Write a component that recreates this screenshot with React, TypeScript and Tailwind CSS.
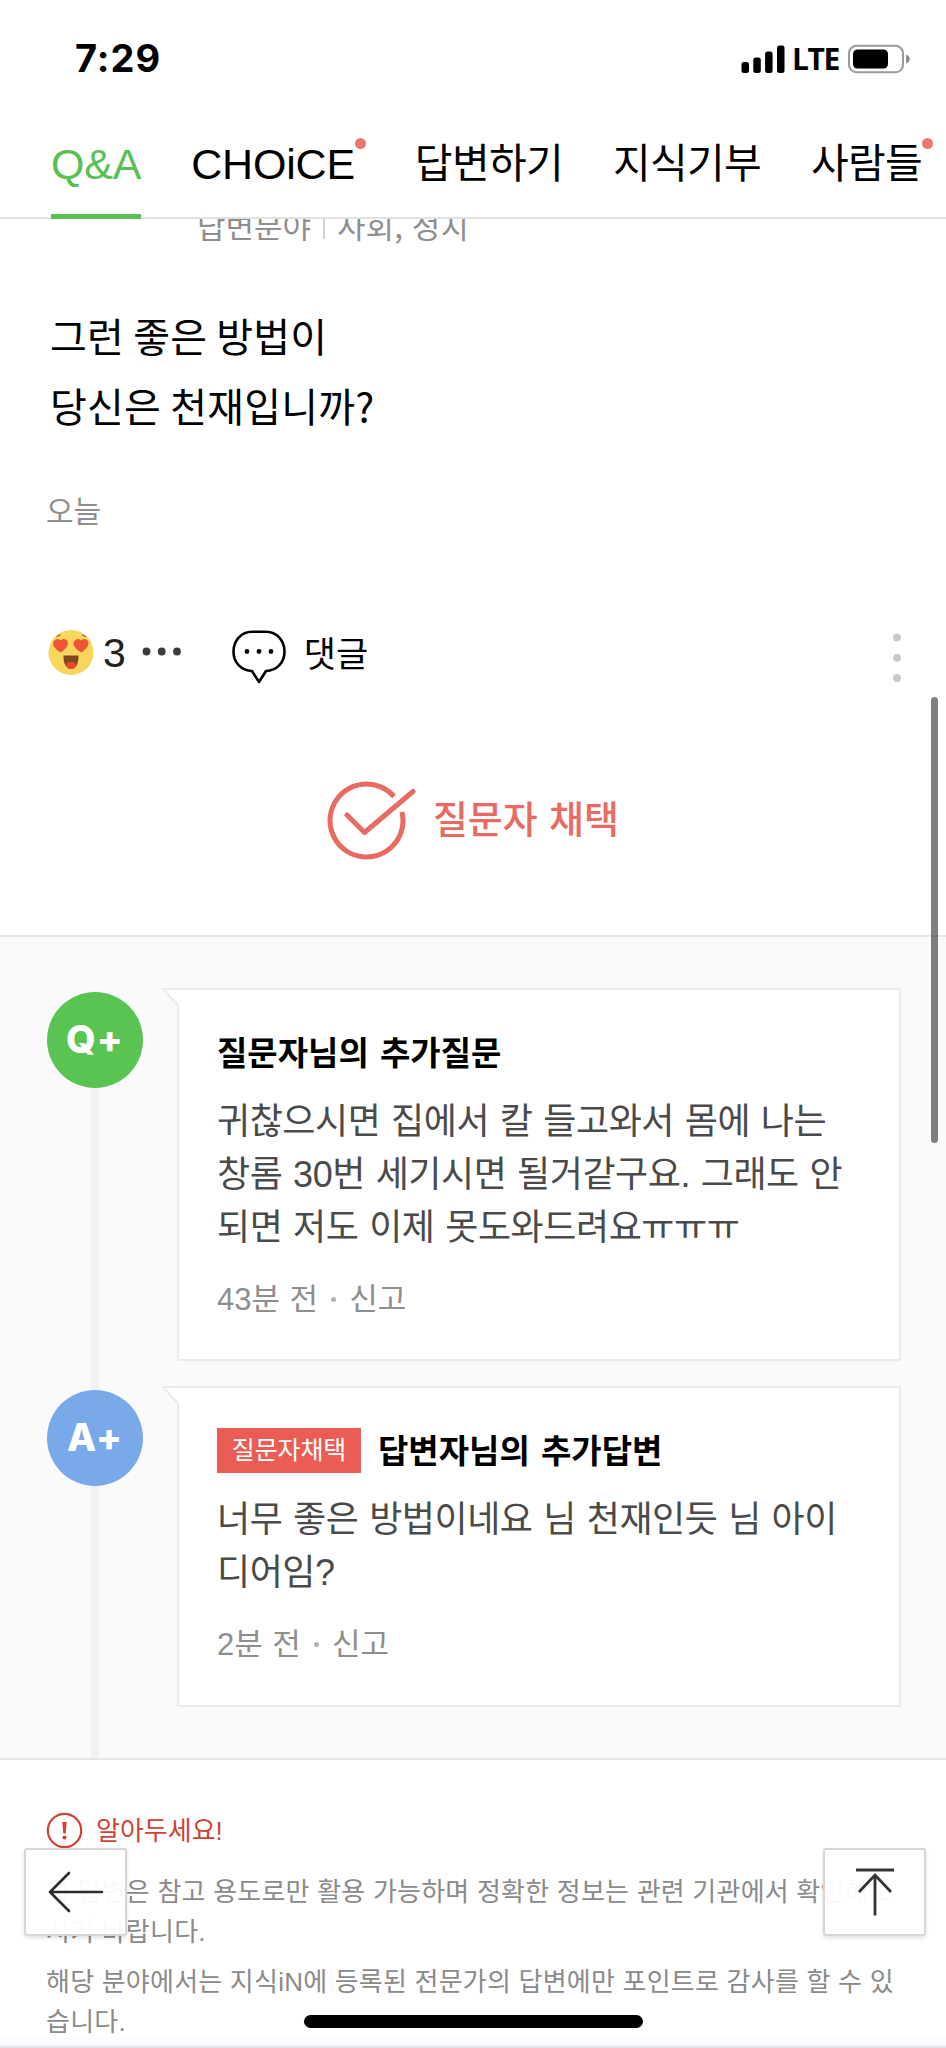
import type { ReactNode } from "react";

const tabs = [
  { label: "Q&A", active: true, className: "text-[43px] tracking-[-0.2px]" },
  { label: "CHOiCE", dot: true, className: "mr-[10px] text-[43px] tracking-[-0.2px]" },
  { label: "답변하기", className: "text-[41px] tracking-[-0.7px]" },
  { label: "지식기부", className: "text-[41px] tracking-[-0.7px]" },
  { label: "사람들", dot: true, className: "text-[41px] tracking-[-0.7px]" },
];

function StatusBar() {
  return (
    <div className="flex h-[110px] items-start justify-between pl-[75px] pr-[35px]">
      <span className="mt-[34px] font-['Inter'] text-[38px] font-bold leading-[48px] tracking-[1px] text-black">
        7:29
      </span>

      <div className="mt-[43px] flex items-center">
        <svg width="44" height="30" viewBox="0 0 44 30">
          <rect x="0.5" y="18" width="7.5" height="11" rx="2.5" />
          <rect x="12.3" y="13.5" width="7.5" height="15.5" rx="2.5" />
          <rect x="24.1" y="7.5" width="7.5" height="21.5" rx="2.5" />
          <rect x="36" y="1.5" width="7.5" height="27.5" rx="2.5" />
        </svg>
        <span className="ml-[7px] w-[56px] pt-[1px] font-['Open_Sans'] text-[30px] font-bold leading-[30px] tracking-[-1.4px] text-black">
          LTE
        </span>
        <svg width="63" height="30" viewBox="0 0 63 30">
          <rect x="1" y="1.8" width="54" height="26.5" rx="7.5" fill="none" stroke="#999" strokeWidth="2" />
          <rect x="5" y="5.5" width="35" height="19" rx="4.5" />
          <path d="M58 10.5c5 1.5 5 7.5 0 9z" fill="#8c8c8c" />
        </svg>
      </div>
    </div>
  );
}

function Tabs() {
  return (
    <nav className="flex h-[109px] gap-[50px] border-b-[2px] border-[#e2e2e2] pl-[51px] font-['Liberation_Sans','Noto_Sans_CJK_KR',sans-serif] leading-[56px]">
      {tabs.map((tab) => (
        <div
          key={tab.label}
          className={`${tab.className} ${
            tab.active
              ? "relative -mb-[2px] h-[109px] border-b-[5px] border-[#58c154] text-[#58c154]"
              : "relative h-[107px] text-black"
          }`}
        >
          <span className="block whitespace-nowrap pt-[26px]">{tab.label}</span>
          {tab.dot && (
            <span className="absolute -right-[11px] top-[28px] size-[11px] rounded-full bg-[#ed7672]" />
          )}
        </div>
      ))}
    </nav>
  );
}

function LoveFace() {
  return (
    <svg width="46" height="46" viewBox="0 0 46 46">
      <circle cx="23" cy="22.5" r="22.5" fill="#f6d65b" />
      <path d="M8.5 7q1.500-1.800 4-2M34 5q2.500 .3 4 2" fill="none" stroke="#6b5a28" strokeWidth="1" />
      <path d="M13 22.5C8 20 3.5 15.5 5.5 11.5 7.2 8.3 11 8.2 12.5 10.5c2-2.300 6-2.200 7.200 1 1.300 4.200-3.200 8.500-6.700 11z" fill="#ee5436" />
      <path d="M33.5 22.5c-5-2.500-9.500-7-7.500-11 1.700-3.200 5.500-3.300 7-1 2-2.300 6-2.200 7.200 1 1.300 4.200-3.200 8.500-6.700 11z" fill="#ee5436" />
      <path d="M15.5 25.5h15c.5 7-2.500 13.500-7.500 13.500S15 32.5 15.5 25.5z" fill="#7c4a1e" />
      <path d="M18 35c1-4.500 9-4.500 10 0-1 3-3 4-5 4s-4-1-5-4z" fill="#f0452f" />
    </svg>
  );
}

function Reactions() {
  return (
    <div className="flex h-[54px] items-start pl-[48px] pr-[45px]">
      <LoveFace />
      <span className="ml-[9px] mt-[3px] font-['Liberation_Sans'] text-[41px] leading-[40px] text-[#222]">3</span>
      <svg className="ml-[16px] mt-[17px]" width="40" height="9" viewBox="0 0 40 9" fill="#3a3a3a">
        <circle cx="4.5" cy="4.5" r="3.9" />
        <circle cx="19.7" cy="4.5" r="3.9" />
        <circle cx="35" cy="4.5" r="3.9" />
      </svg>
      <svg className="ml-[50px]" width="54" height="54" viewBox="0 0 54 54">
        <path
          d="M20 1.7h14C45 1.7 52.5 11 52.5 21.5 52.5 33 44.5 40.5 34 41L27 52 20 41C9.5 40.5 1.5 33 1.5 21.5 1.5 11 9 1.7 20 1.7z"
          fill="none"
          stroke="#000"
          strokeWidth="2.6"
          strokeLinejoin="round"
        />
        <circle cx="15" cy="21.5" r="2.4" />
        <circle cx="27" cy="21.5" r="2.4" />
        <circle cx="39" cy="21.5" r="2.4" />
      </svg>
      <span className="ml-[18px] font-['Noto_Sans_CJK_KR',sans-serif] text-[35px] leading-[44px] text-black">
        댓글
      </span>
      <svg className="ml-auto mt-[3px]" width="8" height="50" viewBox="0 0 8 50" fill="#c8c8ca">
        <circle cx="4" cy="4.5" r="3.9" />
        <circle cx="4" cy="24.8" r="3.9" />
        <circle cx="4" cy="45" r="3.9" />
      </svg>
    </div>
  );
}

function Adopted() {
  return (
    <div className="mt-[97px] flex h-[80px] items-center pl-[326px] text-[#e96a60]">
      <svg width="90" height="80" viewBox="0 0 90 80" fill="none" stroke="currentColor" strokeWidth="5" strokeLinecap="round" strokeLinejoin="round">
        <path d="M68 15.5A36.5 36.5 0 1 0 76 31" strokeLinecap="butt" />
        <path d="M21 34l17.5 17.5L87 10.5" />
      </svg>
      <span className="-mt-[8px] ml-[17px] font-['Noto_Sans_CJK_KR',sans-serif] text-[38px] font-medium leading-[50px] tracking-[-0.1px] [word-spacing:3px]">
        질문자 채택
      </span>
    </div>
  );
}

type ReplyProps = {
  mark: string;
  markClass: string;
  cardClass: string;
  title: string;
  badge?: string;
  time: string;
  children: ReactNode;
};

function Reply({ mark, markClass, cardClass, title, badge, time, children }: ReplyProps) {
  return (
    <div className="flex items-start pl-[47px] pr-[45px]">
      <div
        className={`${markClass} mt-[4px] flex size-[96px] shrink-0 items-center justify-center rounded-full font-['Inter'] text-[38px] font-extrabold tracking-[1px] text-white`}
      >
        {mark}
      </div>

      <div className={`${cardClass} relative ml-[34px] flex-1 border-[2px] border-[#ebebeb] bg-white pl-[38px]`}>
        {/* speech tail */}
        <svg className="absolute -left-[18px] -top-[2px]" width="20" height="20" viewBox="0 0 20 20">
          <path d="M2 1h18v18h-2v-1.5z" fill="#fff" />
          <path d="M20 1H2l15 16.5V20" fill="none" stroke="#ebebeb" strokeWidth="2" />
        </svg>

        <div className="flex h-[46px] items-center">
          {badge && (
            <span className="mr-[17px] flex h-[45px] w-[144px] items-center justify-center bg-[#ea5c54] pb-[5px] font-['Noto_Sans_CJK_KR',sans-serif] text-[25px] leading-[39px] tracking-[-0.1px] text-white">
              {badge}
            </span>
          )}
          <strong className="pt-[3px] font-['Liberation_Sans','Noto_Sans_CJK_KR',sans-serif] text-[33px] font-bold text-black [word-spacing:2px]">
            {title}
          </strong>
        </div>

        <p className="mt-[19px] font-['Liberation_Sans','Noto_Sans_CJK_KR',sans-serif] text-[36px] leading-[53.2px] tracking-[-0.45px] text-[#4a4a4a] [word-spacing:1.2px]">
          {children}
        </p>

        <p className="mt-[24px] flex font-['Liberation_Sans','Noto_Sans_CJK_KR',sans-serif] text-[31px] leading-[44px] text-[#8e8e8e] [word-spacing:1px]">
          {time}
          <span className="mx-[13px] mt-[19px] size-[5px] rounded-full bg-[#b4b4b4]" />
          신고
        </p>
      </div>
    </div>
  );
}

function Notice() {
  return (
    <section className="h-[288px] overflow-hidden bg-white pl-[46px] pt-[51px] font-['Liberation_Sans','Noto_Sans_CJK_KR',sans-serif] text-[26px] leading-[40px] text-[#8a8a8a]">
      <div className="flex h-[40px] items-center text-[#cf4334]">
        <svg width="37" height="37" viewBox="0 0 37 37">
          <circle cx="18.5" cy="18.5" r="16.7" fill="none" stroke="currentColor" strokeWidth="2.2" />
          <path d="M16.3 10h4.4l-1 11.5h-2.4z" fill="currentColor" />
          <circle cx="18.5" cy="25.5" r="2.1" fill="currentColor" />
        </svg>
        <span className="ml-[13px]">알아두세요!</span>
      </div>
      <p className="mt-[21px] whitespace-nowrap tracking-[0.22px]">
        위 답변은 참고 용도로만 활용 가능하며 정확한 정보는 관련 기관에서 확인해보
        <br />
        시기 바랍니다.
      </p>
      <p className="mt-[10px] whitespace-nowrap tracking-[0.22px]">
        해당 분야에서는 지식iN에 등록된 전문가의 답변에만 포인트로 감사를 할 수 있
        <br />
        습니다.
      </p>
    </section>
  );
}

export default function App() {
  return (
    <div className="relative h-[2048px] w-[946px] overflow-hidden bg-white">
      <header className="relative z-10 bg-white">
        <StatusBar />
        <Tabs />
      </header>

      <p className="-mt-[14px] flex h-[44px] pl-[197px] font-['Noto_Sans_CJK_KR',sans-serif] text-[31px] leading-[40px] text-[#8e8e8e] [word-spacing:2px]">
        답변분야
        <span className="ml-[12px] mr-[12px] mt-[12px] h-[22px] w-[2px] bg-[#d2d2d2]" />
        사회, 정치
      </p>

      <p className="mt-[51px] pl-[50px] font-['Noto_Sans_CJK_KR',sans-serif] text-[40px] leading-[70.3px] tracking-[0.2px] text-black">
        그런 좋은 방법이
        <br />
        당신은 천재입니까?
      </p>
      <p className="mb-[101px] mt-[48px] pl-[46px] font-['Noto_Sans_CJK_KR',sans-serif] text-[30px] leading-[40px] text-[#8e8e8e]">
        오늘
      </p>

      <Reactions />
      <Adopted />

      <section className="relative mt-[74px] h-[825px] border-y-[2px] border-[#e6e6e6] bg-[#fafafa]">
        <div className="absolute bottom-0 left-[91px] top-[60px] w-[8px] bg-[#f1f2f5]" />
        <div className="relative flex flex-col gap-[25px] pt-[51px]">
          <Reply
            mark="Q+"
            markClass="bg-[#59c452]"
            cardClass="h-[373px] pt-[40px]"
            title="질문자님의 추가질문"
            time="43분 전"
          >
            귀찮으시면 집에서 칼 들고와서 몸에 나는
            <br />
            창롬 30번 세기시면 될거같구요. 그래도 안
            <br />
            되면 저도 이제 못도와드려요ㅠㅠㅠ
          </Reply>
          <Reply
            mark="A+"
            markClass="bg-[#7aa9ea]"
            cardClass="h-[321px] pt-[40px]"
            title="답변자님의 추가답변"
            badge="질문자채택"
            time="2분 전"
          >
            너무 좋은 방법이네요 님 천재인듯 님 아이
            <br />
            디어임?
          </Reply>
        </div>
      </section>

      <Notice />

      {/* floating buttons */}
      <button className="absolute left-[24px] top-[1848px] flex h-[88px] w-[103px] items-center justify-center rounded-[3px] border-[2px] border-[#d6d6d6] bg-white/95 shadow-[0_2px_4px_rgba(0,0,0,0.12)]">
        <svg width="56" height="42" viewBox="0 0 56 42" fill="none" stroke="#2b2d30" strokeWidth="2.6" strokeLinecap="round" strokeLinejoin="round">
          <path d="M21 2L2 21l19 19M2 21h52" />
        </svg>
      </button>
      <button className="absolute right-[20px] top-[1848px] flex h-[88px] w-[103px] items-center justify-center rounded-[3px] border-[2px] border-[#d6d6d6] bg-white/95 shadow-[0_2px_4px_rgba(0,0,0,0.12)]">
        <svg width="40" height="48" viewBox="0 0 40 48" fill="none" stroke="#333438" strokeWidth="2.8">
          <path d="M1 2h38M20 7v40.5M4 24L20 7l16 17" />
        </svg>
      </button>

      {/* scroll thumb */}
      <div className="absolute right-[8px] top-[697px] h-[446px] w-[7px] rounded-full bg-black/50" />

      {/* home indicator */}
      <div className="absolute bottom-0 left-0 h-[12px] w-full border-b-[2px] border-[#e4e4ea] bg-gradient-to-b from-white/0 to-[#f7f7fb]" />
      <div className="absolute left-[304px] top-[2015px] h-[13px] w-[339px] rounded-full bg-black" />
    </div>
  );
}
